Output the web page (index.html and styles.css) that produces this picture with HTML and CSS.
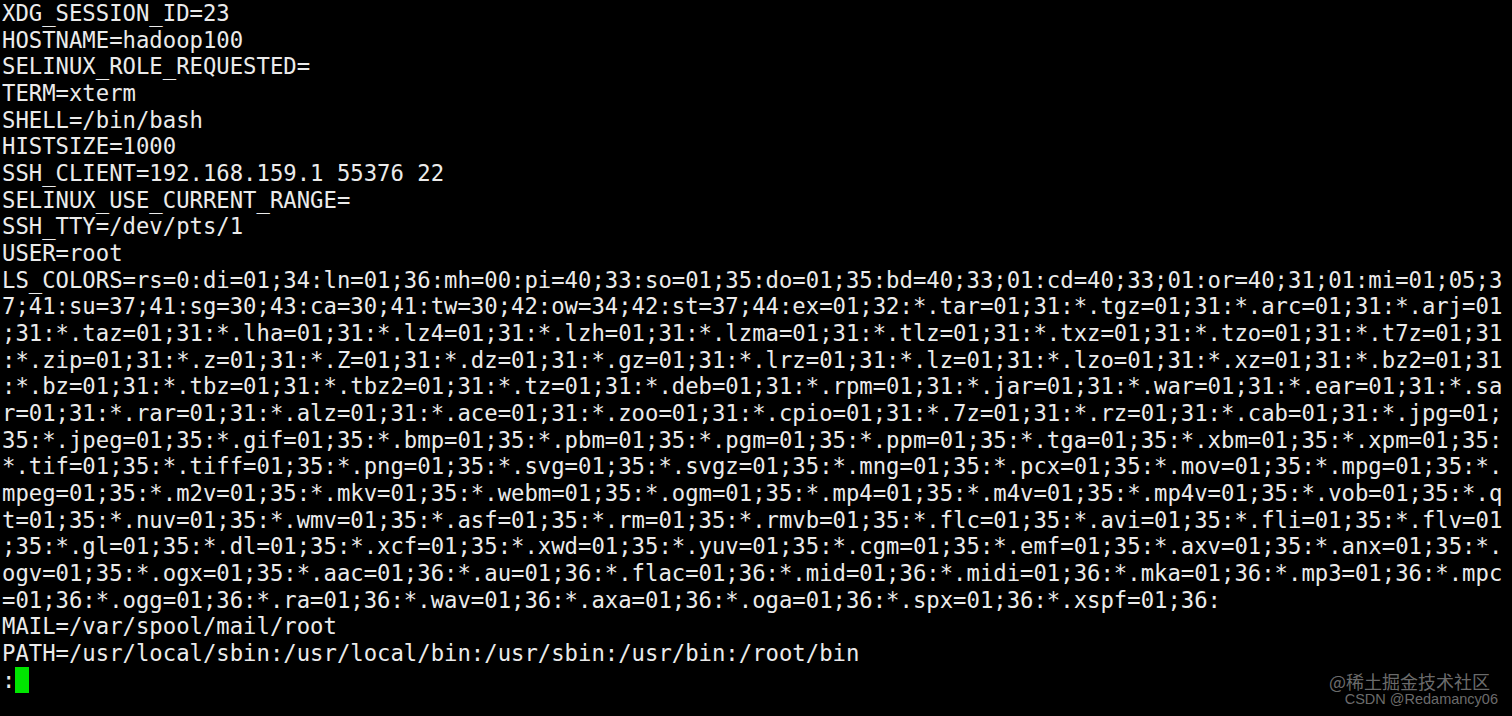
FILE: index.html
```html
<!DOCTYPE html>
<html>
<head>
<meta charset="utf-8">
<link rel="stylesheet" href="styles.css">
</head>
<body>
<div class="term">
<div class="line">XDG_SESSION_ID=23</div>
<div class="line">HOSTNAME=hadoop100</div>
<div class="line">SELINUX_ROLE_REQUESTED=</div>
<div class="line">TERM=xterm</div>
<div class="line">SHELL=/bin/bash</div>
<div class="line">HISTSIZE=1000</div>
<div class="line">SSH_CLIENT=192.168.159.1 55376 22</div>
<div class="line">SELINUX_USE_CURRENT_RANGE=</div>
<div class="line">SSH_TTY=/dev/pts/1</div>
<div class="line">USER=root</div>
<div class="line">LS_COLORS=rs=0:di=01;34:ln=01;36:mh=00:pi=40;33:so=01;35:do=01;35:bd=40;33;01:cd=40;33;01:or=40;31;01:mi=01;05;3</div>
<div class="line">7;41:su=37;41:sg=30;43:ca=30;41:tw=30;42:ow=34;42:st=37;44:ex=01;32:*.tar=01;31:*.tgz=01;31:*.arc=01;31:*.arj=01</div>
<div class="line">;31:*.taz=01;31:*.lha=01;31:*.lz4=01;31:*.lzh=01;31:*.lzma=01;31:*.tlz=01;31:*.txz=01;31:*.tzo=01;31:*.t7z=01;31</div>
<div class="line">:*.zip=01;31:*.z=01;31:*.Z=01;31:*.dz=01;31:*.gz=01;31:*.lrz=01;31:*.lz=01;31:*.lzo=01;31:*.xz=01;31:*.bz2=01;31</div>
<div class="line">:*.bz=01;31:*.tbz=01;31:*.tbz2=01;31:*.tz=01;31:*.deb=01;31:*.rpm=01;31:*.jar=01;31:*.war=01;31:*.ear=01;31:*.sa</div>
<div class="line">r=01;31:*.rar=01;31:*.alz=01;31:*.ace=01;31:*.zoo=01;31:*.cpio=01;31:*.7z=01;31:*.rz=01;31:*.cab=01;31:*.jpg=01;</div>
<div class="line">35:*.jpeg=01;35:*.gif=01;35:*.bmp=01;35:*.pbm=01;35:*.pgm=01;35:*.ppm=01;35:*.tga=01;35:*.xbm=01;35:*.xpm=01;35:</div>
<div class="line">*.tif=01;35:*.tiff=01;35:*.png=01;35:*.svg=01;35:*.svgz=01;35:*.mng=01;35:*.pcx=01;35:*.mov=01;35:*.mpg=01;35:*.</div>
<div class="line">mpeg=01;35:*.m2v=01;35:*.mkv=01;35:*.webm=01;35:*.ogm=01;35:*.mp4=01;35:*.m4v=01;35:*.mp4v=01;35:*.vob=01;35:*.q</div>
<div class="line">t=01;35:*.nuv=01;35:*.wmv=01;35:*.asf=01;35:*.rm=01;35:*.rmvb=01;35:*.flc=01;35:*.avi=01;35:*.fli=01;35:*.flv=01</div>
<div class="line">;35:*.gl=01;35:*.dl=01;35:*.xcf=01;35:*.xwd=01;35:*.yuv=01;35:*.cgm=01;35:*.emf=01;35:*.axv=01;35:*.anx=01;35:*.</div>
<div class="line">ogv=01;35:*.ogx=01;35:*.aac=01;36:*.au=01;36:*.flac=01;36:*.mid=01;36:*.midi=01;36:*.mka=01;36:*.mp3=01;36:*.mpc</div>
<div class="line">=01;36:*.ogg=01;36:*.ra=01;36:*.wav=01;36:*.axa=01;36:*.oga=01;36:*.spx=01;36:*.xspf=01;36:</div>
<div class="line">MAIL=/var/spool/mail/root</div>
<div class="line">PATH=/usr/local/sbin:/usr/local/bin:/usr/sbin:/usr/bin:/root/bin</div>
<div class="line">:<span class="cursor"></span></div>
</div>
<div class="watermark">
<div class="wm1">@稀土掘金技术社区</div>
<div class="wm2">CSDN @Redamancy06</div>
</div>
</body>
</html>
```

FILE: styles.css
```css
html, body {
  margin: 0;
  padding: 0;
  background: #000;
  height: 100%;
  overflow: hidden;
}

.term {
  padding: 0 0 0 2px;
  font-family: "DejaVu Sans Mono", monospace;
  font-size: 22.25px;
  line-height: 26.68px;
  color: #ebebeb;
}

.line {
  white-space: pre;
  height: 26.68px;
}

.cursor {
  display: inline-block;
  width: 1ch;
  height: 26px;
  background: #00e600;
  vertical-align: top;
}

.watermark {
  position: absolute;
  right: 14px;
  bottom: 8px;
  display: flex;
  flex-direction: column;
  align-items: flex-end;
  font-family: "Noto Sans CJK SC", "Liberation Sans", sans-serif;
  color: rgba(200, 200, 200, 0.55);
}

.wm1 {
  font-size: 18px;
  line-height: 20px;
  margin-right: 8px;
}

.wm2 {
  font-family: "Liberation Sans", "Noto Sans CJK SC", sans-serif;
  font-size: 14.5px;
  line-height: 17px;
}
```
